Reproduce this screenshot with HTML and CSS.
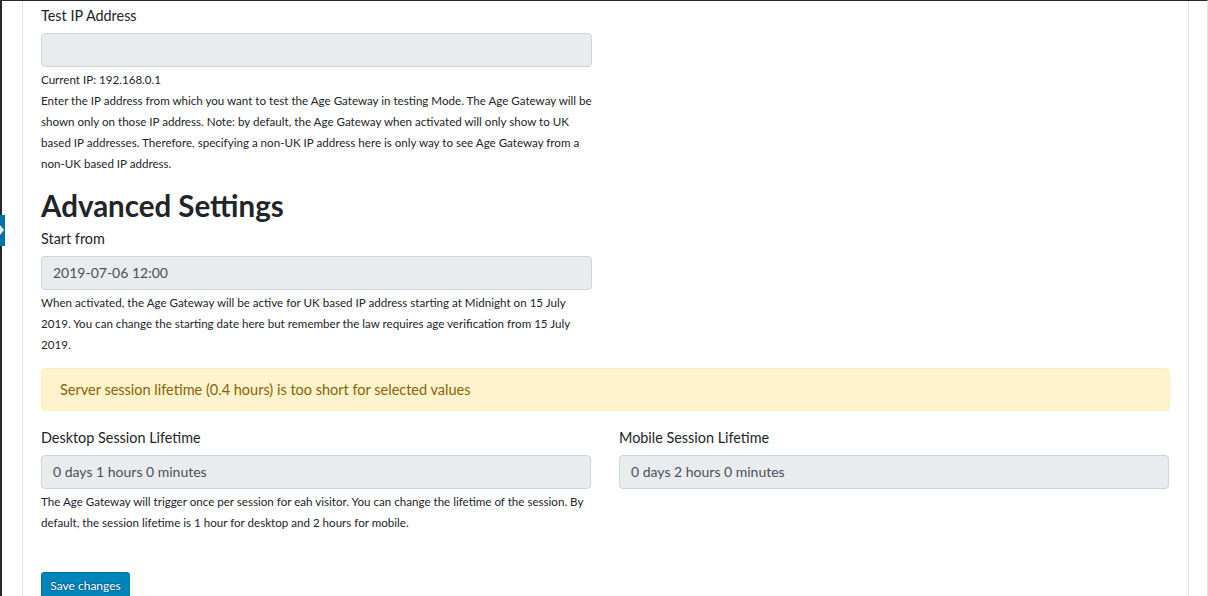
FILE: index.html
```html
<!DOCTYPE html>
<html lang="en">
<head>
<meta charset="utf-8">
<title>Age Gateway Settings</title>
<link rel="stylesheet" href="styles.css">
</head>
<body>
<div class="page">
  <div class="sidebar">
    <span class="current-marker"></span>
  </div>
  <main class="main">
    <section class="card">
      <div class="form-group half">
        <label class="label">Test IP Address</label>
        <div class="input"></div>
        <p class="help">Current IP: 192.168.0.1<br>Enter the IP address from which you want to test the Age Gateway in testing Mode. The Age Gateway will be<br>shown only on those IP address. Note: by default, the Age Gateway when activated will only show to UK<br>based IP addresses. Therefore, specifying a non-UK IP address here is only way to see Age Gateway from a<br>non-UK based IP address.</p>
      </div>

      <h2 class="heading">Advanced Settings</h2>

      <div class="form-group half">
        <label class="label">Start from</label>
        <div class="input">2019-07-06 12:00</div>
        <p class="help">When activated, the Age Gateway will be active for UK based IP address starting at Midnight on 15 July<br>2019. You can change the starting date here but remember the law requires age verification from 15 July<br>2019.</p>
      </div>

      <div class="alert">Server session lifetime (0.4 hours) is too short for selected values</div>

      <div class="row">
        <div class="form-group">
          <label class="label">Desktop Session Lifetime</label>
          <div class="input">0 days 1 hours 0 minutes</div>
          <p class="help">The Age Gateway will trigger once per session for eah visitor. You can change the lifetime of the session. By<br>default, the session lifetime is 1 hour for desktop and 2 hours for mobile.</p>
        </div>
        <div class="form-group">
          <label class="label">Mobile Session Lifetime</label>
          <div class="input">0 days 2 hours 0 minutes</div>
        </div>
      </div>

      <div class="actions">
        <button class="button-primary" type="button">Save changes</button>
      </div>
    </section>
  </main>
</div>
</body>
</html>
```

FILE: styles.css
```css
* { box-sizing: border-box; }

html, body {
  margin: 0;
  padding: 0;
  background: #ffffff;
  height: 596px;
  overflow: hidden;
}

body {
  font-family: Lato, "Open Sans", "Liberation Sans", sans-serif;
  color: #212529;
}

.page {
  display: flex;
  width: 1208px;
  height: 596px;
  border-top: 1px solid #23282d;
  border-right: 1px solid #e2e4e7;
}

.sidebar {
  position: relative;
  width: 2px;
  flex: 0 0 2px;
  background: #23282d;
}

.current-marker {
  position: absolute;
  top: 214px;
  left: 0;
  width: 5px;
  height: 31px;
  background: #0073aa;
}

.current-marker::after {
  content: "";
  position: absolute;
  left: 0;
  top: 10px;
  border-top: 5px solid transparent;
  border-bottom: 5px solid transparent;
  border-left: 4px solid #f1f1f1;
}

.main {
  flex: 1;
  display: flex;
  padding-left: 20px;
  padding-right: 18px;
}

.card {
  flex: 1;
  border-left: 1px solid #e2e4e7;
  border-right: 1px solid #e2e4e7;
  padding: 4px 18px 0 18px;
}

.form-group {
  display: flex;
  flex-direction: column;
}

.half {
  width: 551px;
}

.label {
  font-size: 14.4px;
  line-height: 22px;
  margin-bottom: 6px;
  color: #212529;
}

.input {
  height: 34px;
  background: #e9ecef;
  border: 1px solid #ced4da;
  border-radius: 4px;
  padding: 0 11px;
  font-size: 14px;
  line-height: 32px;
  color: #495057;
}

.help {
  margin: 2px 0 0 0;
  font-size: 11.6px;
  line-height: 21px;
  white-space: nowrap;
  color: #212529;
}

.heading {
  margin: 14px 0 4px 0;
  font-size: 29.5px;
  line-height: 36px;
  font-weight: 700;
  color: #212529;
}

.alert {
  margin-top: 13px;
  background: #fff3cd;
  border: 1px solid #ffeeba;
  border-radius: 4px;
  padding: 11px 18px;
  font-size: 14.5px;
  line-height: 19px;
  color: #856404;
}

.row {
  display: grid;
  grid-template-columns: 550px 550px;
  column-gap: 28px;
  margin-top: 16px;
}

.actions {
  margin-top: 39px;
}

.button-primary {
  width: 89px;
  height: 28px;
  padding: 0;
  background: #0085ba;
  border: 1px solid #0073aa;
  border-radius: 3px;
  box-shadow: 0 1px 0 #006799;
  color: #ffffff;
  font-family: Lato, "Open Sans", "Liberation Sans", sans-serif;
  font-size: 12px;
  line-height: 26px;
  text-align: center;
  text-shadow: 0 -1px 1px #006799, 1px 0 1px #006799, 0 1px 1px #006799, -1px 0 1px #006799;
  cursor: pointer;
}
```
